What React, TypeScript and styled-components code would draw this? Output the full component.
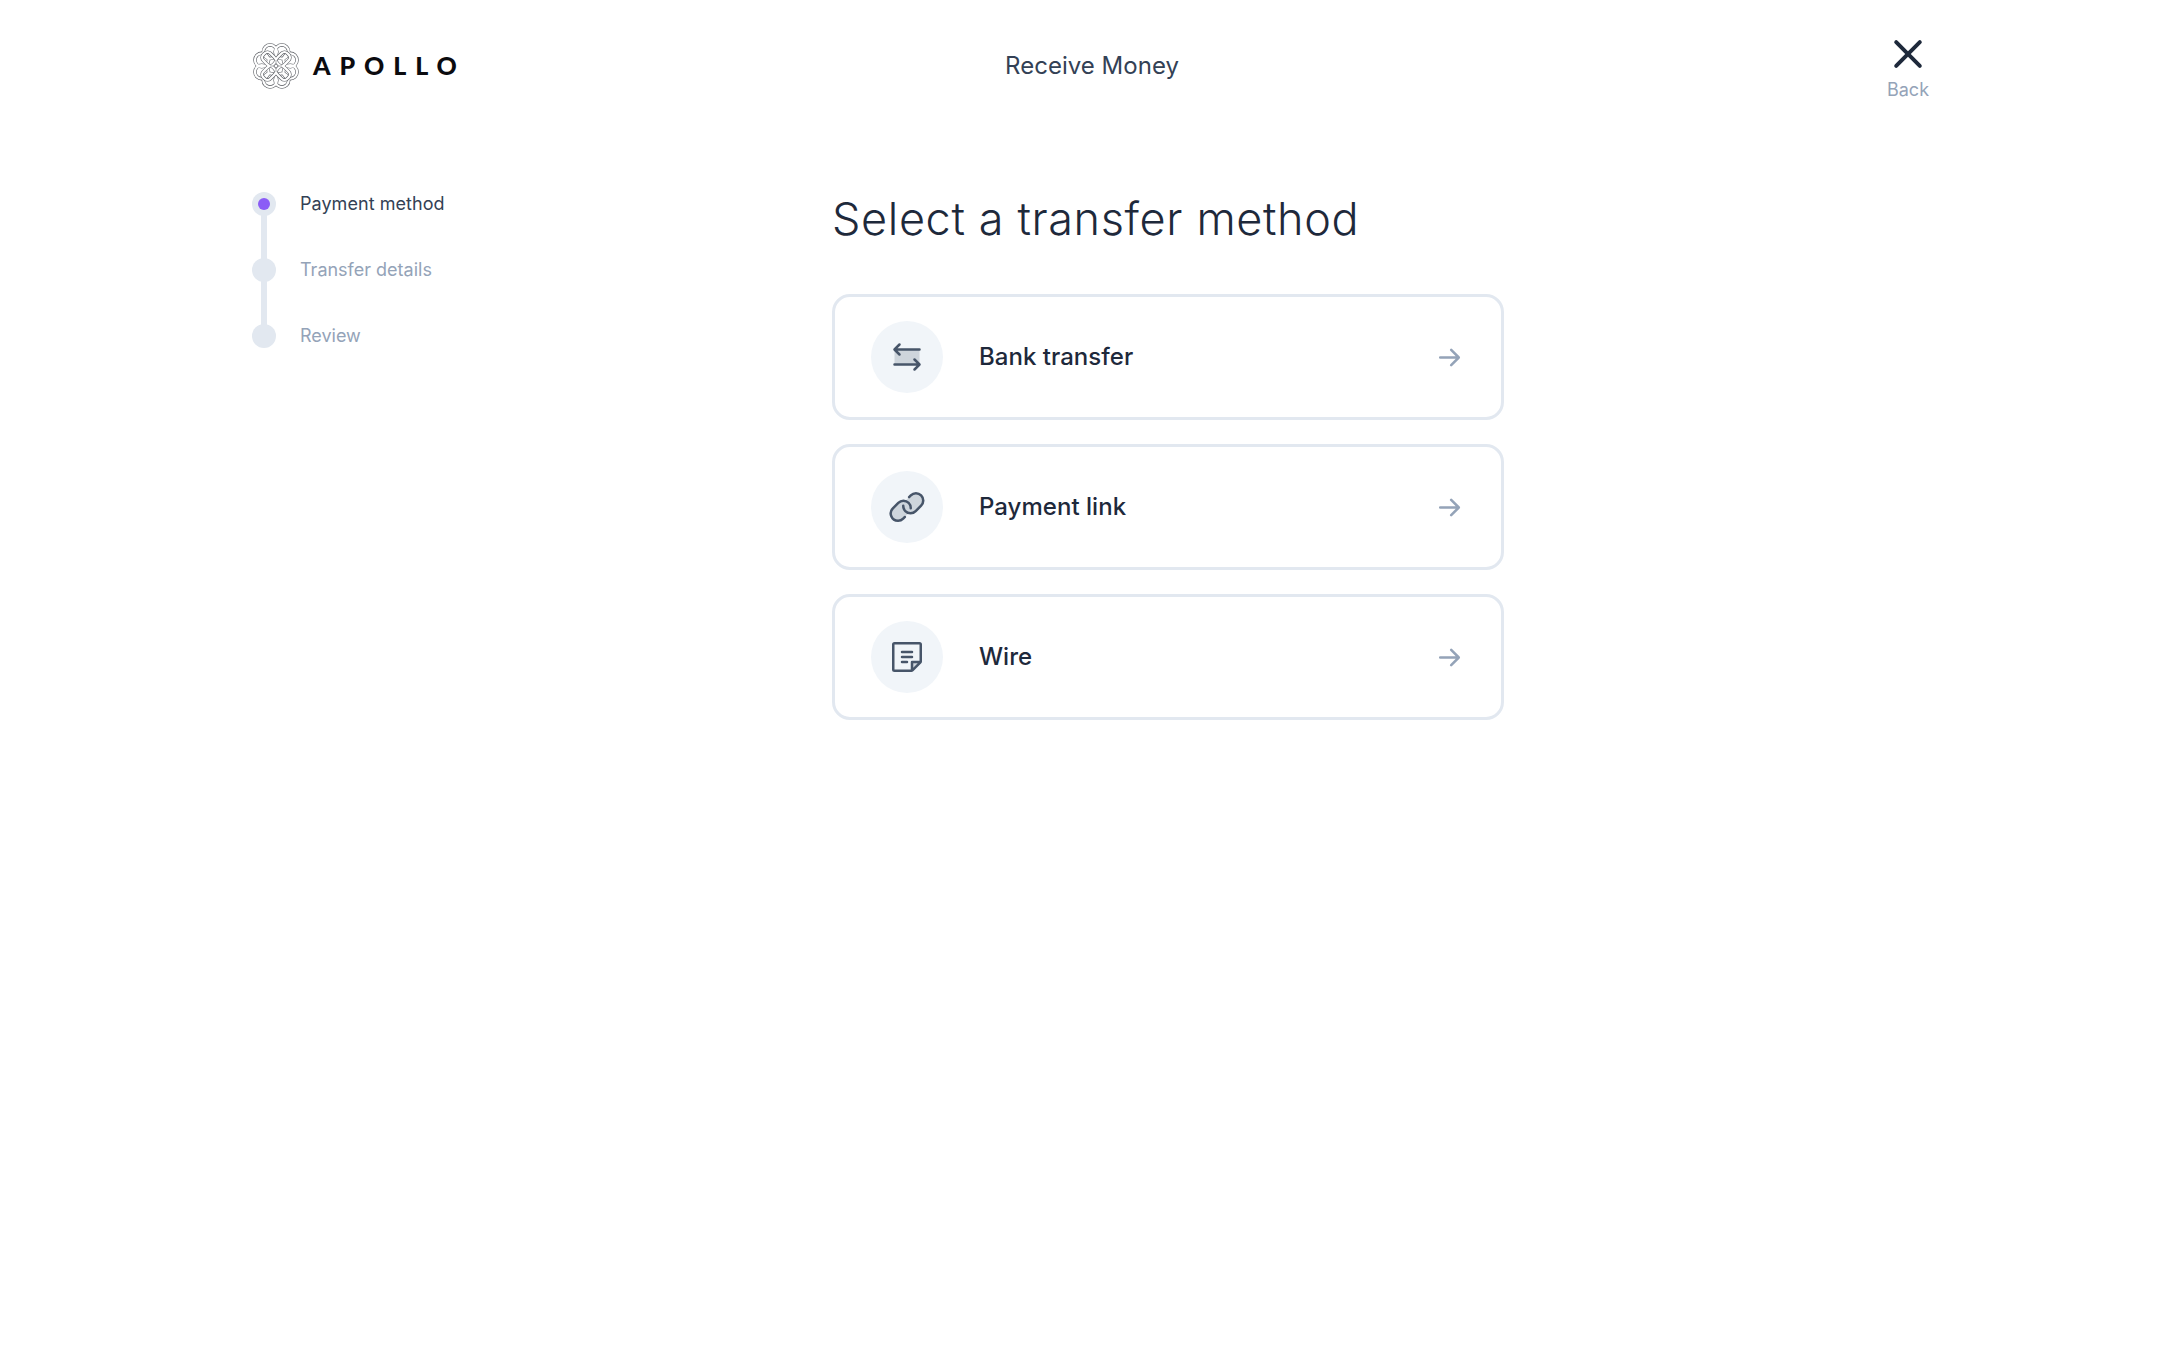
import React from "react";
import styled, { createGlobalStyle } from "styled-components";
import { PiArrowsLeftRightDuotone, PiLinkDuotone, PiNoteDuotone, PiArrowRightBold, PiXBold } from "react-icons/pi";

const Global = createGlobalStyle`
  html, body { margin: 0; padding: 0; background: #fff; }
  body { font-family: Inter, "Liberation Sans", sans-serif; }
`;

const Page = styled.div`
  width: 1680px;
  margin: 0 auto;
  min-height: 1347px;
`;

const Header = styled.header`
  display: grid;
  grid-template-columns: 1fr auto 1fr;
  align-items: start;
  height: 192px;
  padding-top: 30px;
  box-sizing: border-box;
`;

const Brand = styled.div`
  display: flex;
  align-items: center;
  gap: 13px;
  height: 72px;
`;

const BrandName = styled.span`
  font-family: Lato, Inter, sans-serif;
  font-size: 25px;
  font-weight: 900;
  letter-spacing: 8.9px;
  padding-bottom: 2px;
  color: #0b0b0f;
`;

const PageTitle = styled.div`
  height: 72px;
  line-height: 72px;
  font-size: 24px;
  font-weight: 380;
  letter-spacing: 0.02px;
  color: #334155;
`;

const BackButton = styled.div`
  justify-self: end;
  width: 48px;
  display: flex;
  flex-direction: column;
  align-items: center;
  color: #1e293b;
`;

const BackGlyph = styled.span`
  display: flex;
  padding: 3px;
`;

const BackLabel = styled.span`
  font-size: 18px;
  line-height: 24px;
  color: #94a3b8;
`;

const Body = styled.main`
  display: grid;
  grid-template-columns: 580px 672px;
`;

const Steps = styled.ol`
  list-style: none;
  margin: 0;
  padding: 0;
`;

const Step = styled.li<{ $last?: boolean }>`
  position: relative;
  display: flex;
  align-items: center;
  gap: 24px;
  height: 24px;
  margin-bottom: ${(p) => (p.$last ? 0 : 42)}px;
  &::after {
    content: ${(p) => (p.$last ? "none" : '""')};
    position: absolute;
    left: 9px;
    top: 20px;
    width: 6px;
    height: 50px;
    background: #e2e8f0;
  }
`;

const StepDot = styled.span`
  position: relative;
  z-index: 1;
  flex: none;
  width: 24px;
  height: 24px;
  border-radius: 50%;
  background: #e2e8f0;
  display: flex;
  align-items: center;
  justify-content: center;
`;

const StepCore = styled.span`
  width: 12px;
  height: 12px;
  border-radius: 50%;
  background: #8b5cf6;
`;

const StepLabel = styled.span<{ $active?: boolean }>`
  font-size: 18px;
  line-height: 24px;
  letter-spacing: ${(p) => (p.$active ? "0.05px" : "0")};
  color: ${(p) => (p.$active ? "#334155" : "#94a3b8")};
`;

const Heading = styled.h1`
  margin: 0 0 48px;
  font-size: 45px;
  line-height: 54px;
  font-weight: 360;
  letter-spacing: 0.63px;
  color: #1e293b;
`;

const Methods = styled.div`
  display: flex;
  flex-direction: column;
  gap: 24px;
`;

const Card = styled.div`
  box-sizing: border-box;
  height: 126px;
  border: 3px solid #e2e8f0;
  border-radius: 18px;
  padding: 0 38px 0 36px;
  display: flex;
  align-items: center;
  gap: 36px;
  background: #fff;
`;

const IconCircle = styled.span`
  flex: none;
  width: 72px;
  height: 72px;
  border-radius: 50%;
  background: #f1f5f9;
  color: #475569;
  display: flex;
  align-items: center;
  justify-content: center;
`;

const CardLabel = styled.span`
  flex: 1;
  font-size: 24px;
  line-height: 28px;
  font-weight: 460;
  letter-spacing: 0.03px;
  padding-bottom: 1px;
  color: #1e293b;
`;

const Arrow = styled.span`
  display: flex;
  color: #94a3b8;
`;

const LogoMark = () => {
  const lobes = [22.5, 67.5, 112.5, 157.5, 202.5, 247.5, 292.5, 337.5];
  const diag = [45, 135, 225, 315];
  const links = (stroke: string, w: number) => (
    <g fill="none" stroke={stroke} strokeWidth={w}>
      {diag.map((a) => (
        <rect key={a} x={27} y={19} width={14} height={10} rx={4} transform={`rotate(${a} 24 24)`} />
      ))}
    </g>
  );
  const rings = (stroke: string, w: number) => (
    <g fill="none" stroke={stroke} strokeWidth={w}>
      {lobes.map((a) => (
        <circle
          key={a}
          cx={24 + 15.4 * Math.cos((a * Math.PI) / 180)}
          cy={24 + 15.4 * Math.sin((a * Math.PI) / 180)}
          r={6.8}
        />
      ))}
    </g>
  );
  return (
    <svg width="48" height="48" viewBox="0 0 48 48" aria-hidden>
      {rings("#55585e", 3.4)}
      {rings("#fff", 2.3)}
      {links("#55585e", 3.4)}
      {links("#fff", 2.3)}
      <circle cx="24" cy="24" r="1.8" fill="#fff" stroke="#55585e" strokeWidth="0.6" />
      <path d="M24 18v4M24 26v4M18 24h4M26 24h4" stroke="#55585e" strokeWidth="0.5" />
    </svg>
  );
};

const methods = [
  { label: "Bank transfer", icon: <PiArrowsLeftRightDuotone size={40} /> },
  { label: "Payment link", icon: <PiLinkDuotone size={40} /> },
  { label: "Wire", icon: <PiNoteDuotone size={40} /> },
];

export default function App() {
  return (
    <>
      <Global />
      <Page>
        <Header>
          <Brand>
            <LogoMark />
            <BrandName>APOLLO</BrandName>
          </Brand>
          <PageTitle>Receive Money</PageTitle>
          <BackButton>
            <BackGlyph><PiXBold size={42} /></BackGlyph>
            <BackLabel>Back</BackLabel>
          </BackButton>
        </Header>
        <Body>
          <Steps>
            <Step>
              <StepDot><StepCore /></StepDot>
              <StepLabel $active>Payment method</StepLabel>
            </Step>
            <Step>
              <StepDot />
              <StepLabel>Transfer details</StepLabel>
            </Step>
            <Step $last>
              <StepDot />
              <StepLabel>Review</StepLabel>
            </Step>
          </Steps>
          <section>
            <Heading>Select a transfer method</Heading>
            <Methods>
              {methods.map((m) => (
                <Card key={m.label}>
                  <IconCircle>{m.icon}</IconCircle>
                  <CardLabel>{m.label}</CardLabel>
                  <Arrow><PiArrowRightBold size={27} /></Arrow>
                </Card>
              ))}
            </Methods>
          </section>
        </Body>
      </Page>
    </>
  );
}
